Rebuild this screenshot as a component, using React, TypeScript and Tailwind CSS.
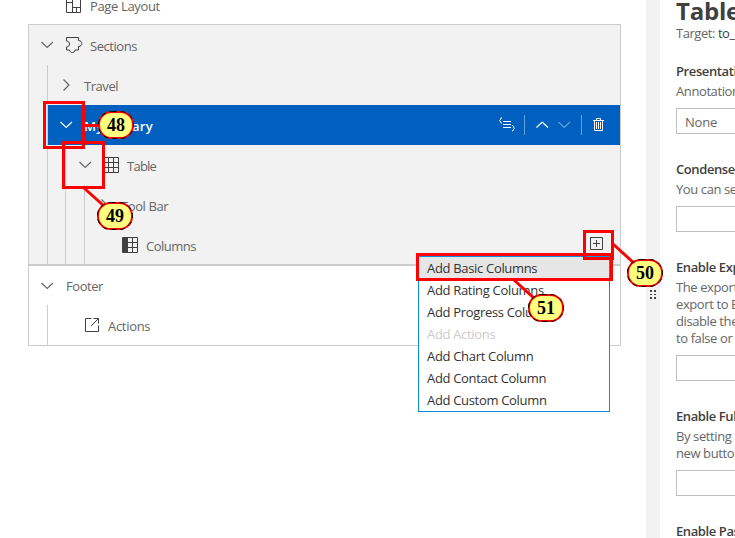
import type { ReactNode } from "react";

const FONT = "font-['Open_Sans','Noto_Sans',sans-serif]";

function Chevron({ dir = "down", className = "" }: { dir?: "down" | "right" | "up"; className?: string }) {
  const d = dir === "down" ? "M2.5 5l5.7 5.5L14 5" : dir === "up" ? "M2.5 10.5L8.2 5l5.8 5.5" : "M5.5 2.5L11 8l-5.5 5.5";
  return (
    <svg className={`h-4 w-4 shrink-0 ${className}`} viewBox="0 0 16 16" fill="none" stroke="currentColor" strokeWidth="1.2">
      <path d={d} />
    </svg>
  );
}

function Icon({ children, className = "", size = "h-4 w-4", box = 16 }: { children: ReactNode; className?: string; size?: string; box?: number }) {
  return (
    <svg className={`shrink-0 text-[#404040] ${size} ${className}`} viewBox={`0 0 ${box} ${box}`} fill="none" stroke="currentColor" strokeWidth="1">
      {children}
    </svg>
  );
}

function Row({ children, className = "" }: { children: ReactNode; className?: string }) {
  return <div className={`flex items-center ${className}`}>{children}</div>;
}

function Label({ children, className = "tracking-[-0.3px]" }: { children: ReactNode; className?: string }) {
  return <span className={`mt-px whitespace-nowrap text-[13px] leading-[18px] ${className}`}>{children}</span>;
}

function Outline() {
  return (
    <div className="w-[593px] shrink-0 text-[#666]">
      <div className="flex h-6 items-start pl-[37px]">
        <Icon className="-mt-[3px]">
          <path d="M1.500 1.500h14v14h-14zM7.500 1.500v14M1.500 5.500h6M7.500 10.500h8M11.500 10.500v5" />
        </Icon>
        <div className="-mt-[4px] ml-[9px] flex">
          <Label className="tracking-[-0.35px]">Page Layout</Label>
        </div>
      </div>
      <div className="border border-b-2 border-[#ccc] bg-[#f2f2f2]">
        <Row className="h-10 pl-[10px]">
          <Chevron />
          <Icon className="ml-[10px]" size="h-[18px] w-[18px]" box={18}>
            <path d="M1.500 1.500H13.500V4.500C18 4.500 18 10.500 13.500 10.500V14H10C9.500 17.500 5 17.500 4.500 14H1.500V11C5.500 11 5.500 5 1.500 5Z" />
          </Icon>
          <Label className="ml-[7px] tracking-[-0.45px]">Sections</Label>
        </Row>
        <div className="ml-[18px] h-[199px] border-l border-[#ccc]">
          <Row className="h-10 pl-[10px]">
            <Chevron dir="right" />
            <Label className="ml-[10px] tracking-[-0.45px]">Travel</Label>
          </Row>
          <Row className="h-10 bg-[#0060c0] pl-[10px] pr-[13px] text-white">
            <Chevron />
            <Label className="ml-[10px] font-semibold tracking-[0.2px]">My Library</Label>
            <div className="ml-auto flex items-center">
              <svg className="h-[18px] w-[18px]" viewBox="0 0 18 18" fill="none" stroke="currentColor">
                <path d="M5 5.500h8M5 8.500h8M5 11.500h8M4 1.800c-2.500 0-.5 2-2.500 2.700c2 .7 0 2.700 2.500 2.700M14 9.500c2.500 0 .5 2 2.500 2.700c-2 .7 0 2.700-2.500 2.700" />
              </svg>
              <i className="ml-2 h-5 w-px bg-[#65a0d9]" />
              <Chevron dir="up" className="ml-[9px]" />
              <Chevron className="ml-[6px] opacity-40" />
              <i className="ml-[9px] h-5 w-px bg-[#65a0d9]" />
              <svg className="ml-[9px] h-4 w-4" viewBox="0 0 16 16" fill="none" stroke="currentColor">
                <path d="M2 3.500h11M5.500 3.500v-2h4v2M3.500 3.500v10h8v-10M5.500 5v7M7.500 5v7M9.500 5v7" />
              </svg>
            </div>
          </Row>
          <div className="ml-[17px] h-[119px] border-l border-[#ccc]">
            <Row className="h-10 pl-[11px]">
              <Chevron />
              <Icon className="ml-[10px]">
                <path d="M.5.500h15v15h-15zM.5 5.500h15M.5 10.500h15M5.500.500v15M10.500.500v15" />
              </Icon>
              <Label className="ml-[8px] tracking-[-0.75px]">Table</Label>
            </Row>
            <div className="ml-[18px] h-[79px] border-l border-[#ccc]">
              <Row className="h-10 pl-[11px]">
                <Chevron dir="right" />
                <Label className="ml-[9px] tracking-[-0.4px]">Tool Bar</Label>
              </Row>
              <Row className="h-10 pl-[37px] pr-[15px]">
                <Icon>
                  <path d="M.5.500h15v15h-15zM5.500 5.500h10M5.500 10.500h10M10.500.500v15" />
                  <path d="M1 1h5v14H1z" fill="currentColor" stroke="none" />
                </Icon>
                <Label className="ml-[8px] tracking-[-0.5px]">Columns</Label>
                <Icon className="-mt-[2px] ml-auto">
                  <path d="M1.500 1.500h12v12h-12zM7.500 4v7M4 7.500h7" />
                </Icon>
              </Row>
            </div>
          </div>
        </div>
      </div>
      <div className="border border-t-0 border-[#ccc] bg-white">
        <Row className="h-[39px] pl-[10px]">
          <Chevron />
          <Label className="ml-[11px] tracking-[-0.45px]">Footer</Label>
        </Row>
        <Row className="ml-[18px] h-10 border-l border-[#ccc] pl-[36px]">
          <Icon className="-mt-[1px]">
            <path d="M7.500 1.500h-6v13h13v-6M9.500 1.500h5v5M14 2L7 9" />
          </Icon>
          <Label className="ml-[8px] tracking-[-0.3px]">Actions</Label>
        </Row>
      </div>
    </div>
  );
}

function Property({ title, lines, value = "", className = "" }: { title: string; lines: string[]; value?: string; className?: string }) {
  return (
    <section className={className}>
      <h2 className="h-5 text-[13px] font-semibold leading-[19px] tracking-[-0.4px] text-[#404040]">{title}</h2>
      {lines.map((l) => (
        <p key={l} className="h-[17px] text-[13px] leading-[18px] tracking-[-0.4px] text-[#666]">{l}</p>
      ))}
      <div className="mt-[9px] h-[26px] border border-[#bfbfbf] pl-2 text-[13px] leading-[26px] tracking-[-0.2px] text-[#666]">{value}</div>
    </section>
  );
}

function Menu() {
  const items = ["Add Basic Columns", "Add Rating Columns", "Add Progress Column", "Add Actions", "Add Chart Column", "Add Contact Column", "Add Custom Column"];
  return (
    <div className="absolute left-[418px] top-[256px] h-[156px] w-[192px] border border-[#0a8de0] bg-white tracking-[-0.32px]">
      {items.map((t, i) => (
        <div key={t} className={`h-[22px] whitespace-nowrap pl-2 text-[13px] leading-[23px] ${i === 0 ? "bg-[#e6e6e6]" : ""} ${i === 3 ? "text-[#ccc]" : "text-[#333]"}`}>
          {t}
        </div>
      ))}
    </div>
  );
}

const marks = [
  { n: 48, box: [44.5, 102.5, 39, 45], line: [85, 125.5, 100, 125.5], x: 98, y: 111 },
  { n: 49, box: [63.5, 142.5, 40, 45], line: [84, 188, 104, 206], x: 97, y: 202 },
  { n: 50, box: [584.5, 231.5, 28, 27], line: [613, 244, 635, 264], x: 627, y: 259 },
  { n: 51, box: [417.5, 254.5, 194, 25], line: [514, 280, 536, 300], x: 528, y: 294 },
];

function Callouts() {
  return (
    <svg className="absolute left-0 top-0 h-[538px] w-[735px]" viewBox="0 0 735 538" fill="none">
      {marks.map(({ n, box, line, x, y }) => (
        <g key={n}>
          <rect x={box[0]} y={box[1]} width={box[2]} height={box[3]} stroke="#f00" strokeWidth="3" />
          <line x1={line[0]} y1={line[1]} x2={line[2]} y2={line[3]} stroke="#f00" strokeWidth="3" />
          <rect x={x + 1} y={y + 1} width="34" height="26" rx="12.5" fill="#ffff80" stroke="#f00" strokeWidth="2" />
          <rect x={x + 0.5} y={y + 0.5} width="35" height="27" rx="13" stroke="#000" strokeDasharray="5 4" />
          <text x={x + 18} y={y + 20} textAnchor="middle" fill="#000" className="font-['Liberation_Serif',serif] text-[18px] font-bold">
            {n}
          </text>
        </g>
      ))}
    </svg>
  );
}

export default function App() {
  return (
    <div className={`relative flex h-[538px] w-[735px] overflow-hidden bg-white pl-[28px] ${FONT}`}>
      <Outline />
      <div className="ml-[25px] flex w-[14px] shrink-0 justify-center bg-[#f2f2f2]">
        <svg className="mt-[290px] h-[9px] w-[6px]" viewBox="0 0 6 9" fill="#404040">
          <path d="M0 0h2v2H0zM4 0h2v2H4zM0 4h2v1H0zM4 4h2v1H4zM0 7h2v2H0zM4 7h2v2H4z" />
        </svg>
      </div>
      <aside className="ml-4 w-[300px] shrink-0 whitespace-nowrap">
        <h1 className="-mt-[4px] h-[28px] text-[24px] font-bold leading-[29px] tracking-[-0.2px] text-[#404040]">Table</h1>
        <p className="h-5 text-[13px] leading-[19px] tracking-[-0.45px] text-[#666]">
          Target: <span className="text-[#404040]">to_BookSupplement</span>
        </p>
        <Property className="mt-[18px]" title="Presentation Variant" lines={["Annotation used"]} value="None" />
        <Property className="mt-[26px]" title="Condensed Table" lines={["You can set the"]} />
        <Property className="mt-[26px]" title="Enable Export" lines={["The export", "export to Excel", "disable the", "to false or"]} />
        <Property className="mt-[26px]" title="Enable Full Screen" lines={["By setting", "new button"]} />
        <Property className="mt-[26px]" title="Enable Paste" lines={[]} />
      </aside>
      <Menu />
      <Callouts />
    </div>
  );
}
